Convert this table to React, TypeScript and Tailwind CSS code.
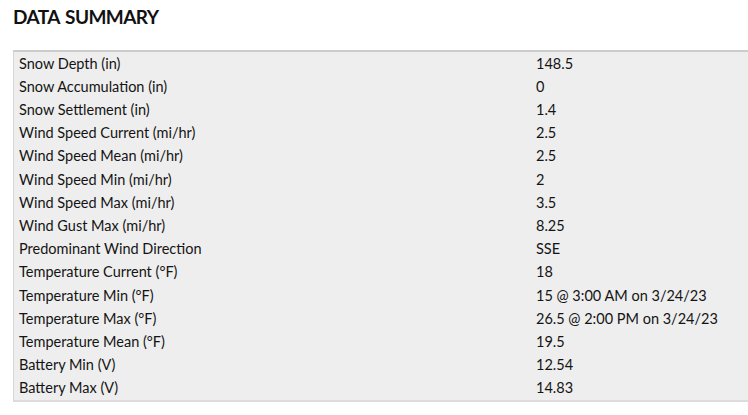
const rows: [string, string][] = [
  ["Snow Depth (in)", "148.5"],
  ["Snow Accumulation (in)", "0"],
  ["Snow Settlement (in)", "1.4"],
  ["Wind Speed Current (mi/hr)", "2.5"],
  ["Wind Speed Mean (mi/hr)", "2.5"],
  ["Wind Speed Min (mi/hr)", "2"],
  ["Wind Speed Max (mi/hr)", "3.5"],
  ["Wind Gust Max (mi/hr)", "8.25"],
  ["Predominant Wind Direction", "SSE"],
  ["Temperature Current (°F)", "18"],
  ["Temperature Min (°F)", "15 @ 3:00 AM on 3/24/23"],
  ["Temperature Max (°F)", "26.5 @ 2:00 PM on 3/24/23"],
  ["Temperature Mean (°F)", "19.5"],
  ["Battery Min (V)", "12.54"],
  ["Battery Max (V)", "14.83"],
];

export default function App() {
  return (
    <div className="w-[748px] h-[415px] overflow-hidden bg-white pl-[13px] pt-[4px] text-[#141414]" style={{ fontFamily: 'Lato, "Open Sans", sans-serif' }}>
      {/* Heading */}
      <h2 className="text-[19px] font-bold leading-[26px] tracking-[-0.6px] [word-spacing:2px] text-[#111]">DATA SUMMARY</h2>

      {/* Summary table */}
      <div className="mt-[20px] bg-[#eeeeee] border-t-2 border-t-[#cccccc] border-l border-l-[#d6d6d6] border-b-2 border-b-[#dcdcdc]">
        {rows.map(([label, value]) => (
          <div key={label} className="flex h-[23.2px] items-center text-[14.5px]">
            <div className="w-[522px] pl-[5px]">{label}</div>
            <div>{value}</div>
          </div>
        ))}
      </div>
    </div>
  );
}
